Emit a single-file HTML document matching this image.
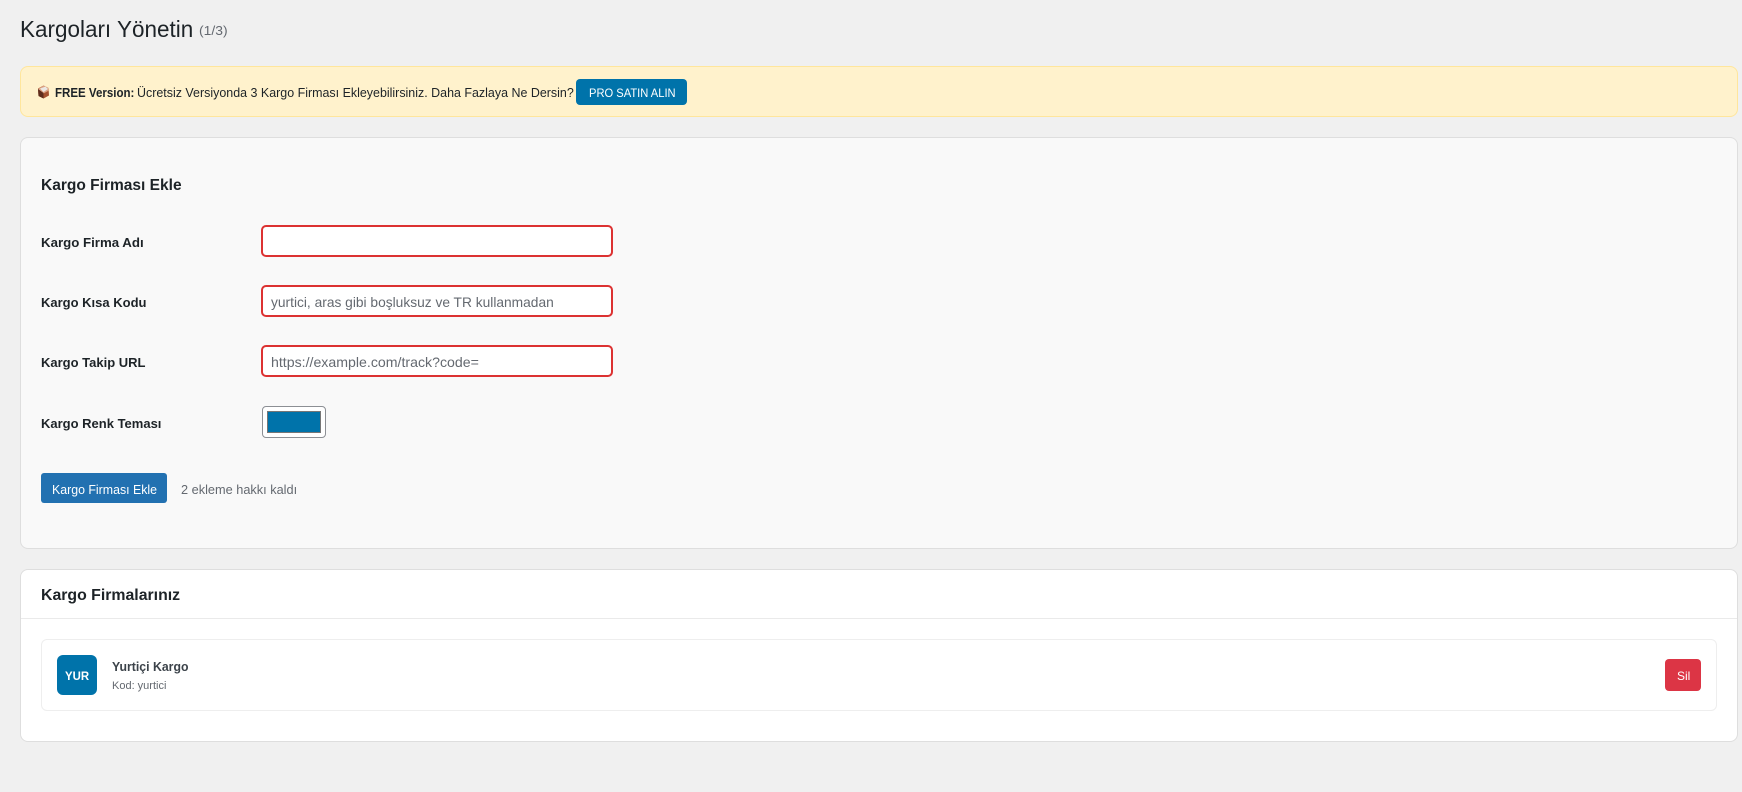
<!DOCTYPE html>
<html lang="tr">
<head>
<meta charset="utf-8">
<title>Kargoları Yönetin</title>
<style>
html,body{margin:0;padding:0;width:1742px;height:792px;overflow:hidden;background:#f0f0f0;}
body{position:relative;font-family:"Liberation Sans",sans-serif;color:#1d2327;font-size:13px;}
.a{position:absolute;box-sizing:border-box;}
.t{position:absolute;white-space:nowrap;line-height:20px;height:20px;transform-origin:left center;}
.card{border:1px solid #dedede;border-radius:8px;background:#fff;}
.inp{left:261px;width:352px;height:32px;background:#fff;border:2px solid #dc3232;border-radius:5px;}
.lab{left:41px;font-weight:bold;font-size:13px;}
.ph{left:271px;font-size:14px;color:#646970;}
</style>
</head>
<body>
<div class="t" style="left:20px;top:19px;font-size:23px;transform:scaleX(.977);">Kargoları Yönetin</div>
<div class="t" style="left:199px;top:21px;font-size:13px;color:#646970;transform:scaleX(1.07);">(1/3)</div>

<div class="a" style="left:20px;top:66px;width:1718px;height:51px;background:#fff2cc;border:1px solid #ffe69c;border-radius:8px;"></div>
<svg class="a" style="left:37px;top:85px;" width="13" height="14" viewBox="0 0 13 14"><path d="M6.5 .5 11.5 3 12 10.5 6.5 13.5 1.5 11 1 3.5Z" fill="#a4512e"/><path d="M6.5 .5 11.5 3 12 5.5 6.5 8.5 1 4Z" fill="#dca283"/><path d="M3 3.5 8.5 1.6 11 4 6.5 7Z" fill="#ece8e4"/><path d="M6.5 8 6.5 13.5 1.5 11 1 4Z" fill="#5e2d1c"/></svg>
<div class="t" style="left:55px;top:83px;font-weight:bold;font-size:13px;transform:scaleX(.886);">FREE Version:</div>
<div class="t" style="left:137px;top:83px;font-size:13px;transform:scaleX(.958);">Ücretsiz Versiyonda 3 Kargo Firması Ekleyebilirsiniz. Daha Fazlaya Ne Dersin?</div>
<div class="a" style="left:576px;top:79px;width:111px;height:26px;background:#0073aa;border-radius:4px;"></div>
<div class="t" style="left:589px;top:83px;font-size:12px;color:#fff;transform:scaleX(.93);">PRO SATIN ALIN</div>

<div class="a card" style="left:20px;top:137px;width:1718px;height:412px;background:#f9f9f9;"></div>
<div class="t" style="left:41px;top:176px;font-size:16px;font-weight:bold;transform:scaleX(.97);">Kargo Firması Ekle</div>

<div class="t lab" style="top:233px;transform:scaleX(1.02);">Kargo Firma Adı</div>
<div class="a inp" style="top:225px;"></div>
<div class="t lab" style="top:293px;">Kargo Kısa Kodu</div>
<div class="a inp" style="top:285px;"></div>
<div class="t ph" style="top:292px;transform:scaleX(.983);">yurtici, aras gibi boşluksuz ve TR kullanmadan</div>
<div class="t lab" style="top:353px;">Kargo Takip URL</div>
<div class="a inp" style="top:345px;"></div>
<div class="t ph" style="top:352px;transform:scaleX(1.01);">https://example.com/track?code=</div>
<div class="t lab" style="top:414px;">Kargo Renk Teması</div>
<div class="a" style="left:262px;top:406px;width:64px;height:32px;background:#fff;border:1px solid #8c8f94;border-radius:4px;"></div>
<div class="a" style="left:267px;top:411px;width:54px;height:22px;background:#0073aa;border:1px solid #767676;"></div>

<div class="a" style="left:41px;top:473px;width:126px;height:30px;background:#2271b1;border-radius:3px;"></div>
<div class="t" style="left:52px;top:480px;font-size:13px;color:#fff;transform:scaleX(.95);">Kargo Firması Ekle</div>
<div class="t" style="left:181px;top:480px;font-size:13px;color:#646970;transform:scaleX(.98);">2 ekleme hakkı kaldı</div>

<div class="a card" style="left:20px;top:569px;width:1718px;height:173px;"></div>
<div class="a" style="left:21px;top:618px;width:1716px;height:1px;background:#eaeaea;"></div>
<div class="t" style="left:41px;top:586px;font-size:16px;font-weight:bold;transform:scaleX(.99);">Kargo Firmalarınız</div>

<div class="a" style="left:41px;top:639px;width:1676px;height:72px;background:#fff;border:1px solid #eeeeee;border-radius:6px;"></div>
<div class="a" style="left:57px;top:655px;width:40px;height:40px;background:#0073aa;border-radius:6px;"></div>
<div class="t" style="left:65px;top:666px;font-size:12px;font-weight:bold;color:#fff;transform:scaleX(.95);">YUR</div>
<div class="t" style="left:112px;top:657px;font-size:13px;font-weight:bold;color:#3c434a;transform:scaleX(.945);">Yurtiçi Kargo</div>
<div class="t" style="left:112px;top:676px;font-size:11px;color:#646970;">Kod: yurtici</div>
<div class="a" style="left:1665px;top:659px;width:36px;height:32px;background:#dc3545;border-radius:4px;"></div>
<div class="t" style="left:1677px;top:666px;font-size:12px;color:#fff;">Sil</div>
</body>
</html>
